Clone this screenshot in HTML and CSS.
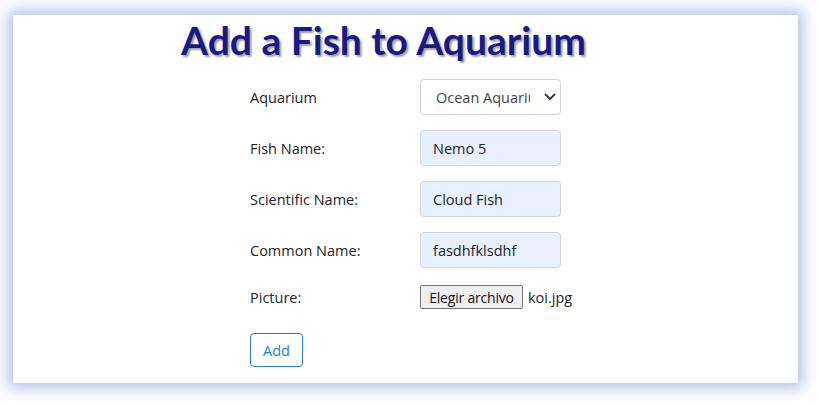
FILE: index.html
```html
<!DOCTYPE html>
<html>
<head>
<meta charset="utf-8">
<link rel="stylesheet" href="styles.css">
</head>
<body>
<div class="card">
  <h1 class="title">Add a Fish to Aquarium</h1>
  <form class="form">
    <label class="label">Aquarium</label>
    <div class="select">
      <span class="select-text">Ocean Aquarium</span>
      <svg class="chev" width="12" height="8" viewBox="0 0 12 8"><path d="M1.5 1.5 L6 6 L10.5 1.5" fill="none" stroke="#343a40" stroke-width="1.8" stroke-linecap="round" stroke-linejoin="round"/></svg>
    </div>
    <label class="label">Fish Name:</label>
    <div class="input">Nemo 5</div>
    <label class="label">Scientific Name:</label>
    <div class="input">Cloud Fish</div>
    <label class="label">Common Name:</label>
    <div class="input">fasdhfklsdhf</div>
    <label class="label">Picture:</label>
    <div class="file">
      <span class="file-btn">Elegir archivo</span>
      <span class="file-name">koi.jpg</span>
    </div>
  </form>
  <button class="add" type="button">Add</button>
</div>
</body>
</html>
```
FILE: styles.css
```css
html, body {
  margin: 0;
  padding: 0;
  background: #ffffff;
}
body {
  font-family: "Open Sans", "Noto Sans", sans-serif;
  color: #212529;
  min-height: 405px;
  padding-top: 15px;
  box-sizing: border-box;
}
.card {
  margin: 0 0 0 13px;
  width: 785px;
  height: 368px;
  background: #ffffff;
  box-shadow: 0 0 14px 5px rgba(120, 138, 218, 0.55);
  box-sizing: border-box;
  padding-top: 1px;
}
.title {
  margin: 0 0 0 168px;
  font-family: "Lato", sans-serif;
  font-weight: 700;
  font-size: 39px;
  line-height: 48px;
  color: #1a1a82;
  text-shadow: 2px 2px 2px rgba(80, 80, 80, 0.55);
  white-space: nowrap;
}
.form {
  margin: 15px 0 0 237px;
  display: grid;
  grid-template-columns: 170px 141px;
  grid-template-rows: 36px 36px 36px 36px 28px;
  row-gap: 15px;
  align-items: center;
}
.label {
  font-size: 14.5px;
}
.select, .input {
  box-sizing: border-box;
  height: 36px;
  width: 141px;
  border: 1px solid #ced4da;
  border-radius: 4px;
  font-size: 14.5px;
  display: flex;
  align-items: center;
}
.select {
  background: #ffffff;
  padding: 0 0 0 15px;
}
.select-text {
  flex: 1;
  overflow: hidden;
  white-space: nowrap;
  color: #444;
}
.chev {
  margin-left: 14px;
  margin-right: 4px;
  flex: none;
}
.input {
  background: #e8f0fe;
  padding: 0 12px;
}
.file {
  display: flex;
  align-items: center;
  gap: 5px;
  font-size: 14.5px;
  white-space: nowrap;
}
.file-btn {
  flex: none;
  box-sizing: border-box;
  height: 24px;
  width: 103px;
  display: flex;
  align-items: center;
  justify-content: center;
  background: #efefef;
  border: 1px solid #767676;
  border-radius: 2px;
  color: #111;
  font-size: 14px;
  letter-spacing: -0.2px;
  white-space: nowrap;
}
.file-name {
  flex: none;
}
.add {
  display: block;
  margin: 22px 0 0 237px;
  box-sizing: border-box;
  width: 53px;
  height: 34px;
  background: #ffffff;
  border: 1px solid #1b7fd6;
  border-radius: 4px;
  color: #1b7fd6;
  font-family: "Open Sans", sans-serif;
  font-size: 14.5px;
  padding: 0;
}
```
